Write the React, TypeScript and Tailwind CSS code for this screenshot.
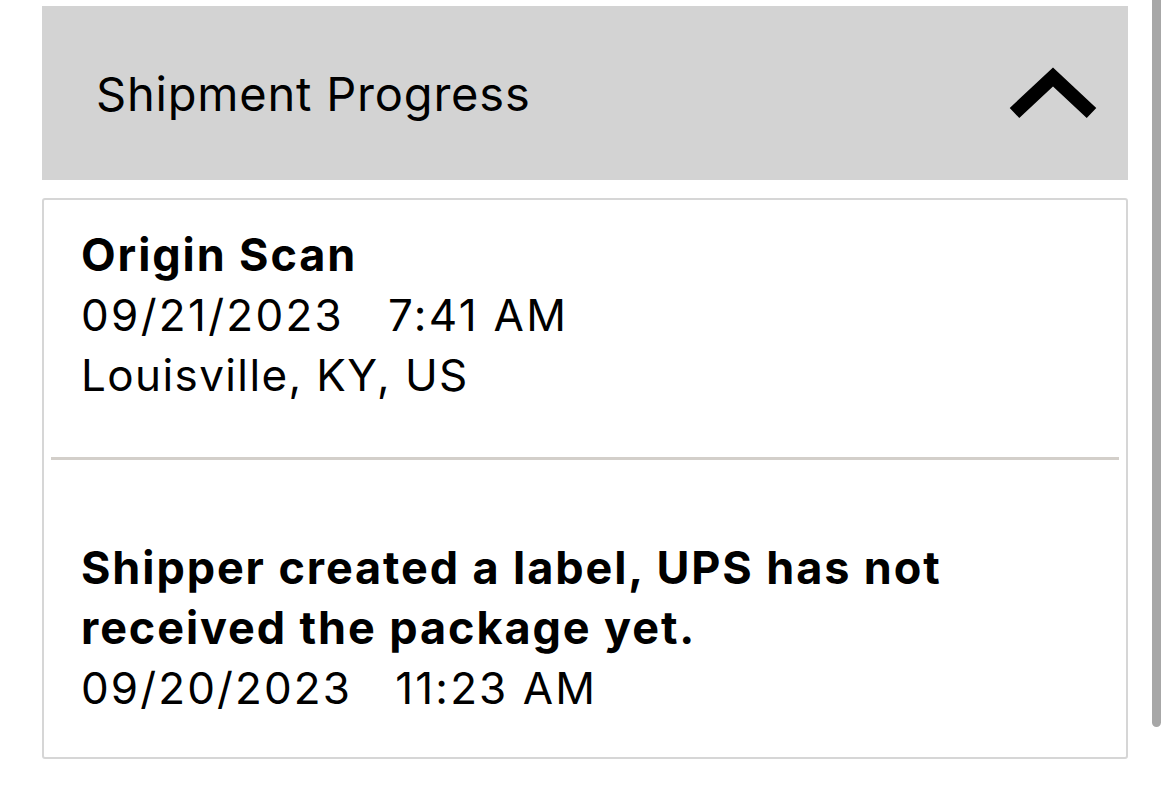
import React from "react";

type Activity = {
  title: string[];
  date: string;
  time: string;
  location?: string;
};

const activities: Activity[] = [
  { title: ["Origin Scan"], date: "09/21/2023", time: "7:41 AM", location: "Louisville, KY, US" },
  {
    title: ["Shipper created a label, UPS has not", "received the package yet."],
    date: "09/20/2023",
    time: "11:23 AM",
  },
];

function ChevronUp() {
  return (
    <svg width="92" height="60" viewBox="0 0 92 60" fill="none">
      <path d="M7.5 50 L46 14 L84.5 50" stroke="#000" strokeWidth="14" strokeLinejoin="miter" strokeLinecap="butt" />
    </svg>
  );
}

export default function App() {
  return (
    <div className="relative min-h-[788px] w-full bg-white font-['Inter','Liberation_Sans',sans-serif] text-black">
      <div className="flex flex-col pt-[6px] pl-[42px] w-[1128px]">
        <div className="flex h-[174px] items-center justify-between bg-[#d3d3d3] pl-[54px] pr-[29px]">
          <span className="text-[47px] leading-none tracking-[0.8px]">Shipment Progress</span>
          <ChevronUp />
        </div>

        <div className="mt-[18px] rounded-[3px] border-2 border-[#d6d6d6] bg-white">
          <div className="pl-[37px] pt-[25px] pb-[52px] text-[44px] leading-[60px]">
            <div className="text-[45px] font-bold tracking-[1.9px]">{activities[0].title[0]}</div>
            <div className="whitespace-pre tracking-[2.3px]">{activities[0].date + "   " + activities[0].time}</div>
            <div className="tracking-[1.4px]">{activities[0].location}</div>
          </div>
          <div className="mx-[7px] h-[3px] bg-[#d3cfca]" />
          <div className="pl-[37px] pt-[78px] pb-[39px] text-[44px] leading-[60px]">
            {activities[1].title.map((t) => (
              <div key={t} className="text-[45px] font-bold tracking-[1.9px]">
                {t}
              </div>
            ))}
            <div className="whitespace-pre tracking-[2.1px]">{activities[1].date + "   " + activities[1].time}</div>
          </div>
        </div>
      </div>

      {/* scroll indicator */}
      <div className="absolute left-[1152px] top-0 h-[727px] w-[9px] rounded-b-full bg-[#a7a7a7]" />
    </div>
  );
}
